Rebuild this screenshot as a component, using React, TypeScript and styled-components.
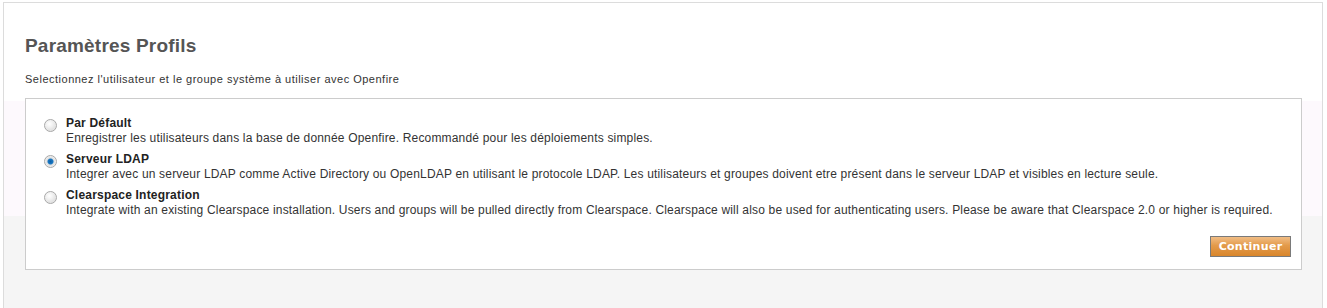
import React, { useState } from "react";
import styled, { createGlobalStyle } from "styled-components";

const Global = createGlobalStyle`
  html, body { margin: 0; padding: 0; background: #ffffff; }
  body { font-family: "Liberation Sans", Arial, sans-serif; color: #333; overflow: hidden; }
`;

const Page = styled.div`
  padding: 2px 0 0 3px;
`;

const Panel = styled.div`
  width: 1320px;
  min-height: 330px;
  border: 1px solid #dcdcdc;
  background: linear-gradient(
    to bottom,
    #ffffff 0px,
    #ffffff 98px,
    #fdf9fd 98px,
    #fdf9fd 213px,
    #f5f5f5 213px,
    #f5f5f5 100%
  );
  padding: 33px 20px 0 21px;
  box-sizing: border-box;
`;

const Title = styled.h1`
  margin: 0;
  font-family: "Liberation Sans", Arial, sans-serif;
  font-size: 19px;
  font-weight: bold;
  letter-spacing: 0.2px;
  color: #555555;
  line-height: 20px;
`;

const Intro = styled.p`
  margin: 17px 0 0 0;
  font-size: 11px;
  letter-spacing: 0.5px;
  line-height: 13px;
  color: #333333;
`;

const Box = styled.div`
  margin-top: 12px;
  width: 1277px;
  box-sizing: border-box;
  border: 1px solid #cccccc;
  background: #ffffff;
  padding: 17px 10px 12px 18px;
`;

const Options = styled.div`
  display: flex;
  flex-direction: column;
  gap: 6px;
`;

const Option = styled.label`
  display: flex;
  align-items: flex-start;
  gap: 9px;
  cursor: pointer;
`;

const RadioDot = styled.span<{ $checked: boolean }>`
  flex: none;
  width: 11px;
  height: 11px;
  margin-top: 3px;
  border-radius: 50%;
  border: 1px solid #a8a8a8;
  background: ${(p) =>
    p.$checked
      ? "radial-gradient(circle at 50% 50%, #0b5fa8 0, #1a78c2 2.5px, #e0e0e0 3.5px, #fafafa 100%)"
      : "radial-gradient(circle at 40% 35%, #ffffff 0, #f2f2f2 3px, #d2d2d2 100%)"};
  box-shadow: inset 0 0 1px #ffffff;
`;

const OptionText = styled.div`
  display: flex;
  flex-direction: column;
`;

const OptionTitle = styled.span`
  font-size: 12px;
  font-weight: bold;
  letter-spacing: 0.2px;
  line-height: 15px;
  color: #222222;
`;

const OptionDesc = styled.span`
  font-size: 12px;
  letter-spacing: 0.18px;
  line-height: 15px;
  color: #333333;
`;

const Actions = styled.div`
  display: flex;
  justify-content: flex-end;
  margin-top: 18px;
`;

const Button = styled.button`
  height: 21px;
  width: 81px;
  padding: 0;
  border: 1px solid #7a7a7a;
  background: linear-gradient(to bottom, #f1bd85 0%, #e39a4a 45%, #d9862b 100%);
  color: #ffffff;
  font-family: "DejaVu Sans", Verdana, sans-serif;
  font-size: 11px;
  font-weight: bold;
  letter-spacing: 0.3px;
  cursor: pointer;
`;

const options = [
  {
    title: "Par Défault",
    desc: "Enregistrer les utilisateurs dans la base de donnée Openfire. Recommandé pour les déploiements simples.",
  },
  {
    title: "Serveur LDAP",
    desc: "Integrer avec un serveur LDAP comme Active Directory ou OpenLDAP en utilisant le protocole LDAP. Les utilisateurs et groupes doivent etre présent dans le serveur LDAP et visibles en lecture seule.",
  },
  {
    title: "Clearspace Integration",
    desc: "Integrate with an existing Clearspace installation. Users and groups will be pulled directly from Clearspace. Clearspace will also be used for authenticating users. Please be aware that Clearspace 2.0 or higher is required.",
  },
];

export default function App() {
  const [selected, setSelected] = useState(1);
  return (
    <Page>
      <Global />
      <Panel>
        <Title>Paramètres Profils</Title>
        <Intro>Selectionnez l'utilisateur et le groupe système à utiliser avec Openfire</Intro>
        <Box>
          <Options>
            {options.map((o, i) => (
              <Option key={o.title} onClick={() => setSelected(i)}>
                <RadioDot $checked={selected === i} />
                <OptionText>
                  <OptionTitle>{o.title}</OptionTitle>
                  <OptionDesc>{o.desc}</OptionDesc>
                </OptionText>
              </Option>
            ))}
          </Options>
          <Actions>
            <Button>Continuer</Button>
          </Actions>
        </Box>
      </Panel>
    </Page>
  );
}
